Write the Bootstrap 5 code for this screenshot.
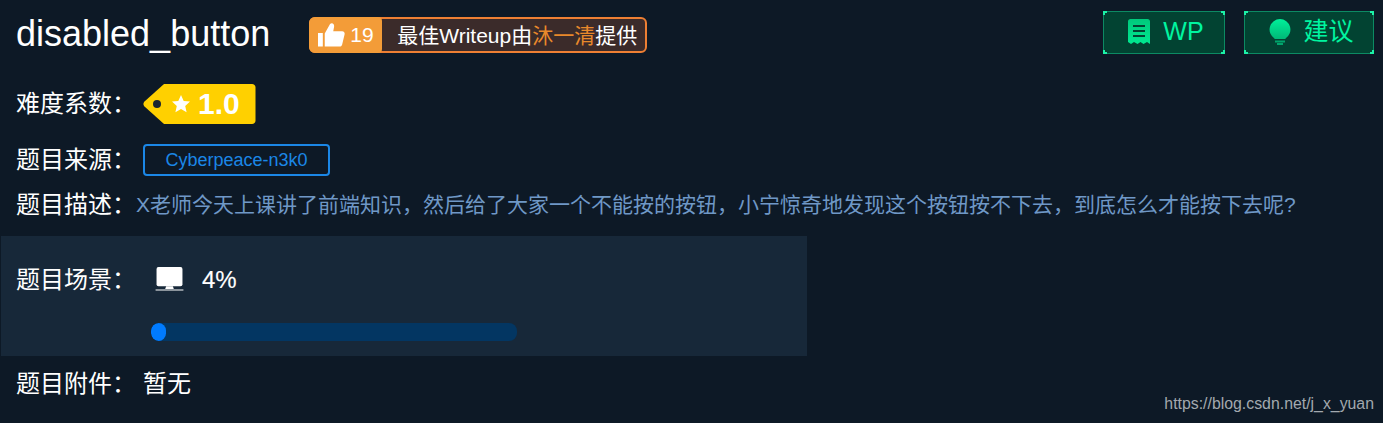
<!DOCTYPE html>
<html lang="zh-CN">
<head>
  <meta charset="UTF-8" />
  <meta name="viewport" content="width=device-width, initial-scale=1.0" />
  <title>disabled_button</title>
  <link href="https://cdn.jsdelivr.net/npm/bootstrap@5.3.2/dist/css/bootstrap.min.css" rel="stylesheet">
  <style>
    html, body { height: 100%; }
    body {
      background: #0d1926; color: #fff; overflow: hidden; position: relative;
      font-family: "Liberation Sans", "Noto Sans CJK SC", sans-serif;
    }
    .task-head { height: 68px; padding: 0 9px 0 16px; }
    .task-title { font-size: 36px; font-weight: 400; line-height: 1; margin: 0; }
    .best-wp {
      display: flex; align-items: stretch; height: 36px; margin: 2px 0 0 39px;
      background: #3b2b2a; border: 2px solid #ee7f33; border-radius: 6px; font-size: 21px;
    }
    .best-count {
      display: flex; align-items: center; gap: 5px; width: 73px; padding-left: 9px; margin: -2px 0 -2px -2px;
      background: #f39c38; border-radius: 6px 4px 4px 6px; font-size: 21px;
    }
    .best-text { padding: 0 8px 0 15px; line-height: 34px; white-space: nowrap; }
    .best-author { color: #e8892b; }
    .neon-btns { margin-bottom: 3px; }
    .neon-btn {
      display: flex; align-items: center; justify-content: center; gap: 12px;
      width: 122px; height: 43px; padding: 0 0 2px 3px; position: relative;
      background: #024332; border: 1px solid #0c8a63; color: #00f5a0; font-size: 25px;
    }
    .neon-btn + .neon-btn { width: 130px; margin-left: 19px; padding-left: 5px; }
    .neon-corner { position: absolute; width: 4px; height: 4px; border: 0 solid #1cf2a8; }
    .c-tl { top: -1px; left: -1px; border-width: 2px 0 0 2px; }
    .c-tr { top: -1px; right: -1px; border-width: 2px 2px 0 0; }
    .c-bl { bottom: -1px; left: -1px; border-width: 0 0 2px 2px; }
    .c-br { bottom: -1px; right: -1px; border-width: 0 2px 2px 0; }
    .info-row { display: flex; align-items: center; padding-left: 16px; font-size: 24px; }
    .row-diff { height: 40px; margin-top: 16px; }
    .row-source { height: 34px; margin-top: 19px; }
    .row-desc { height: 30px; margin-top: 13px; }
    .info-label { flex: none; width: 127px; font-size: 24px; }
    .source-tag {
      width: 187px; height: 32px; line-height: 28px; text-align: center;
      border: 2px solid #1b87e6; border-radius: 4px; color: #1b87e6; font-size: 18px;
    }
    .desc-text { margin-left: -7px; color: #6f98c6; font-size: 21px; white-space: nowrap; }
    .scene-panel { width: 806px; height: 120px; margin: 16px 0 0 1px; background: #172839; padding: 24px 0 0 15px; }
    .scene-top { display: flex; align-items: center; height: 40px; }
    .scene-pct { margin-left: 18px; font-size: 24px; -webkit-text-stroke: .15px #fff; }
    .scene-icon { margin: -2px 0 0 12px; }
    .scene-bar { width: 366px; height: 18px; margin: 23px 0 0 135px; background: #033662; border-radius: 8px; }
    .scene-bar .progress-bar { width: 4%; background: #007bff; border-radius: 8px; }
    .row-attach { height: 32px; margin-top: 12px; }
    .watermark { position: absolute; right: 9px; bottom: 9px; color: #a3a9af; font-size: 15.85px; line-height: 20px; }
  </style>
  <script src="https://cdn.jsdelivr.net/npm/bootstrap@5.3.2/dist/js/bootstrap.bundle.min.js"></script>
</head>
<body>
  <div class="task-head d-flex align-items-center justify-content-between">
    <div class="d-flex align-items-center">
      <h1 class="task-title">disabled_button</h1>
      <div class="best-wp">
        <div class="best-count">
          <svg width="27" height="26" viewBox="0 0 28 26" fill="#fff"><path d="M0 11h5v14H0zM7 11.500 12.500 1.500c2.500-1.600 4.600.4 4.200 3L15.800 9H25c2 0 3 1.600 2.600 3.200L25 23c-.4 1.300-1.400 2-2.600 2H7z"/></svg>
          <span>19</span>
        </div>
        <div class="best-text">最佳Writeup由<span class="best-author">沐一清</span>提供</div>
      </div>
    </div>
    <div class="d-flex neon-btns">
      <div class="neon-btn">
        <i class="neon-corner c-tl"></i><i class="neon-corner c-tr"></i><i class="neon-corner c-bl"></i><i class="neon-corner c-br"></i>
        <svg width="24" height="25" viewBox="0 0 24 25"><defs><linearGradient id="gr1" x1="0" y1="0" x2="0" y2="1"><stop offset="0" stop-color="#00c97c"/><stop offset="1" stop-color="#00e890"/></linearGradient></defs><path fill="url(#gr1)" d="M1 2.500C1 1.100 2 0 3.500 0h17C22 0 23 1.100 23 2.500V25l-3-2-3.500 2-3-2-3 2-3.500-2-3 2-3-2z"/><path stroke="#024332" stroke-width="2" d="M6 7h12M6 12h12M6 17h12"/></svg>
        <span>WP</span>
      </div>
      <div class="neon-btn">
        <i class="neon-corner c-tl"></i><i class="neon-corner c-tr"></i><i class="neon-corner c-bl"></i><i class="neon-corner c-br"></i>
        <svg width="22" height="26" viewBox="0 0 22 26"><defs><linearGradient id="gr2" x1="0" y1="0" x2="0" y2="1"><stop offset="0" stop-color="#00f09a"/><stop offset="1" stop-color="#00b877"/></linearGradient></defs><path fill="url(#gr2)" d="M11 0a10.500 10.500 0 0 1 5.500 19.400V20h-11v-.6A10.500 10.500 0 0 1 11 0z"/><path stroke="#00a56c" stroke-width="2" d="M6 22.500h10M8 25h6"/></svg>
        <span>建议</span>
      </div>
    </div>
  </div>

  <div class="info-row row-diff">
    <div class="info-label">难度系数：</div>
    <svg width="113" height="42" viewBox="0 0 113 42">
      <path fill="#ffd000" d="M21 1h88c2 0 3.500 1.500 3.500 3.500v33c0 2-1.500 3.500-3.500 3.500H21L1.500 23.500c-1.500-1.500-1.500-3.500 0-5z"/>
      <circle cx="14" cy="21" r="4" fill="#1a2430"/>
      <path fill="#fff" d="M38 12l2.700 6 6.300.6-4.800 4.300 1.400 6.300-5.600-3.300-5.600 3.300 1.400-6.300-4.800-4.300 6.300-.6z"/>
      <text x="55" y="31" fill="#fff" font-family="Liberation Sans" font-weight="700" font-size="30">1.0</text>
    </svg>
  </div>
  <div class="info-row row-source">
    <div class="info-label">题目来源：</div>
    <div class="source-tag">Cyberpeace-n3k0</div>
  </div>
  <div class="info-row row-desc">
    <div class="info-label">题目描述：</div>
    <div class="desc-text">X老师今天上课讲了前端知识，然后给了大家一个不能按的按钮，小宁惊奇地发现这个按钮按不下去，到底怎么才能按下去呢?</div>
  </div>

  <div class="scene-panel">
    <div class="scene-top">
      <div class="info-label">题目场景：</div>
      <svg class="scene-icon" width="29" height="24" viewBox="0 0 29 25" fill="#fff"><rect x="1" y="0" width="27" height="20" rx="2"/><path d="M11 20h7l1 3h-9zM0 23.500h29v1H0z"/></svg>
      <span class="scene-pct">4%</span>
    </div>
    <div class="scene-bar progress"><div class="progress-bar"></div></div>
  </div>

  <div class="info-row row-attach">
    <div class="info-label">题目附件：</div>
    <div>暂无</div>
  </div>

  <div class="watermark">https://blog.csdn.net/j_x_yuan</div>
</body>
</html>
